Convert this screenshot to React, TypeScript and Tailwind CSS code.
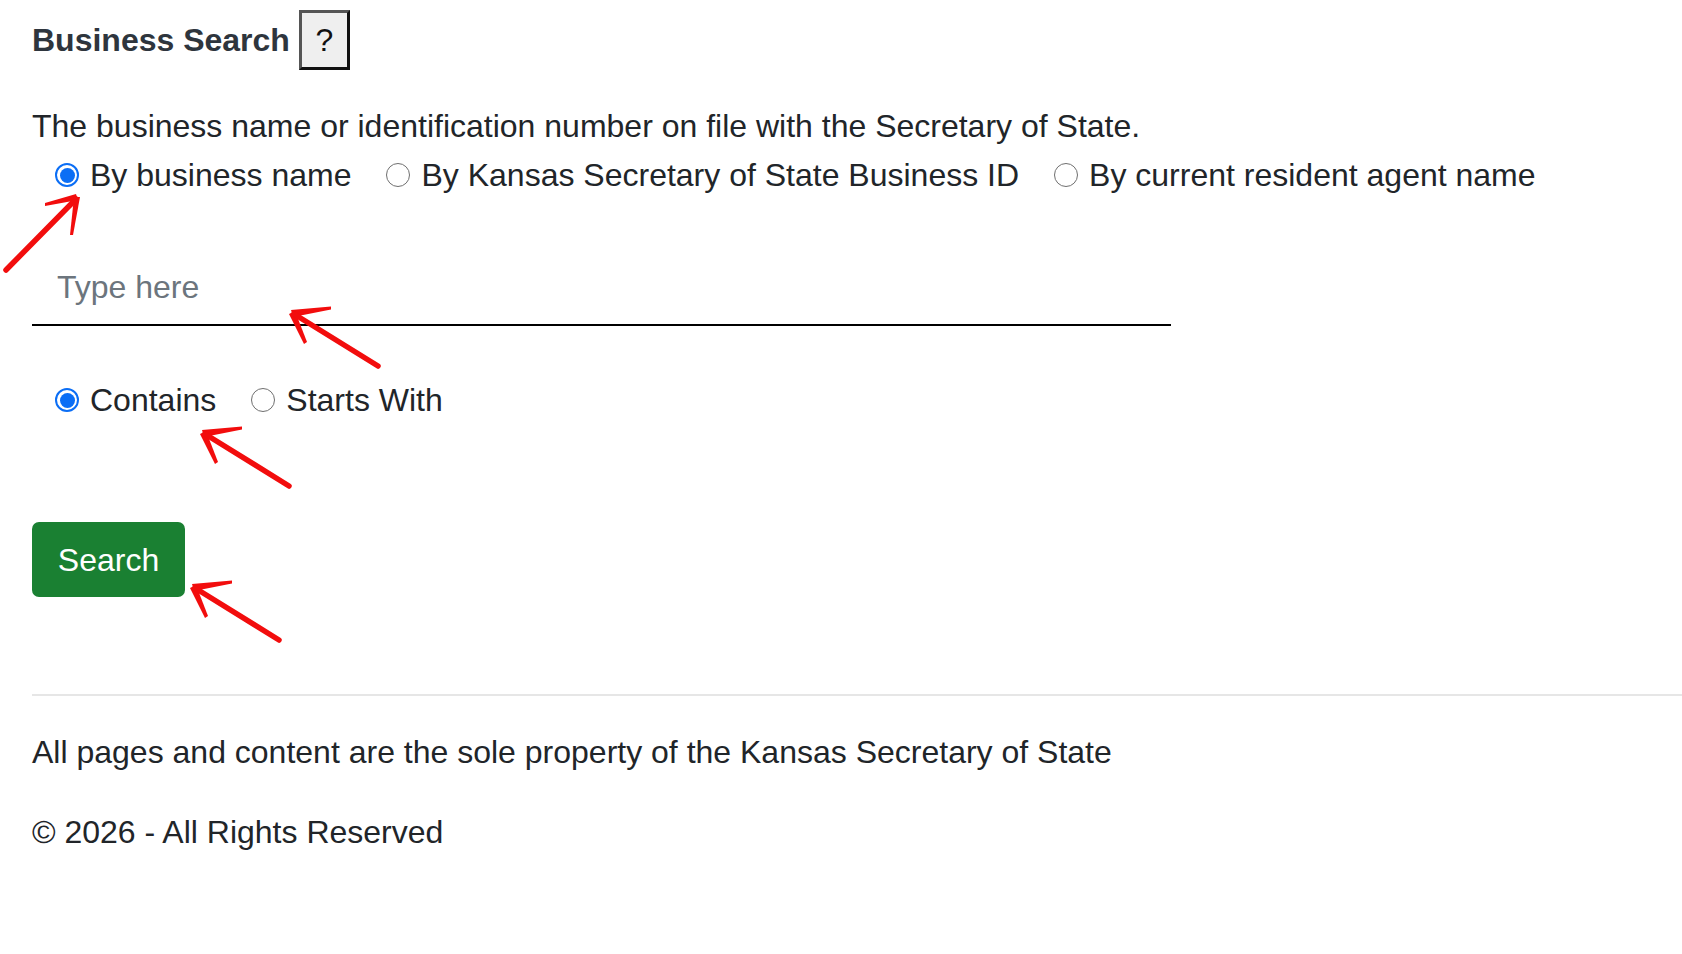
import React from "react";

function Radio({ checked, label }: { checked?: boolean; label: string }) {
  return (
    <label className="flex items-center gap-[11px]">
      {checked ? (
        <span className="flex h-[24px] w-[24px] items-center justify-center rounded-full border-[2px] border-[#0b6ef5] bg-white">
          <span className="h-[15px] w-[15px] rounded-full bg-[#0b6ef5]" />
        </span>
      ) : (
        <span className="h-[24px] w-[24px] rounded-full border-[1.5px] border-[#6f6f6f] bg-white" />
      )}
      <span>{label}</span>
    </label>
  );
}

function ArrowHead() {
  return (
    <g fill="#f20d0d" stroke="none">
      <polygon points="291,310 331,306.5 331,309.5 293,317" />
      <polygon points="295,311 307,342 304,344 289,314" />
      <line x1="294" y1="314" x2="378" y2="366" stroke="#f20d0d" strokeWidth="5.5" strokeLinecap="round" />
    </g>
  );
}

export default function App() {
  return (
    <div className="relative min-h-[954px] w-full bg-white font-['Liberation_Sans',Arial,sans-serif] text-[32px] leading-[48px] text-[#212529]">
      <div className="pl-[32px] pt-[1px]">
        <div className="flex h-[60px] items-center mt-[9px]">
          <h2 className="text-[32px] font-bold text-[#2e353d]">Business Search</h2>
          <button className="ml-[9px] flex h-[60px] w-[51px] items-center justify-center border-[3px] border-t-[#555] border-l-[#555] border-r-[#111] border-b-[#111] bg-[#efefef] text-[32px] text-[#111]">
            ?
          </button>
        </div>

        <p className="mt-[32px]">The business name or identification number on file with the Secretary of State.</p>

        <div className="mt-[1px] flex gap-[35px] pl-[23px]">
          <Radio checked label="By business name" />
          <Radio label="By Kansas Secretary of State Business ID" />
          <Radio label="By current resident agent name" />
        </div>

        <input
          type="text"
          placeholder="Type here"
          className="mt-[51px] block h-[76px] w-[1139px] border-0 border-b-2 border-black bg-transparent pl-[25px] text-[32px] outline-none placeholder:text-[#6c757d]"
        />

        <div className="mt-[50px] flex gap-[35px] pl-[23px]">
          <Radio checked label="Contains" />
          <Radio label="Starts With" />
        </div>

        <button className="mt-[98px] flex h-[75px] w-[153px] items-center justify-center rounded-[7px] bg-[#1a8032] text-[32px] text-white">
          Search
        </button>

        <div className="mt-[97px] h-[2px] bg-[#e6e6e6]" />

        <p className="mt-[32px]">All pages and content are the sole property of the Kansas Secretary of State</p>
        <p className="mt-[32px]">© 2026 - All Rights Reserved</p>
      </div>

      <svg className="pointer-events-none absolute left-0 top-0" width="1682" height="954" viewBox="0 0 1682 954">
        <g fill="#f20d0d">
          <polygon points="76,194 45,203 45,206 78,200" />
          <polygon points="80,197 73,235 70,235 74,197" />
          <line x1="6" y1="270" x2="76" y2="199" stroke="#f20d0d" strokeWidth="5.5" strokeLinecap="round" />
        </g>
        <ArrowHead />
        <g transform="translate(-89,120)">
          <ArrowHead />
        </g>
        <g transform="translate(-99,274)">
          <ArrowHead />
        </g>
      </svg>
    </div>
  );
}
